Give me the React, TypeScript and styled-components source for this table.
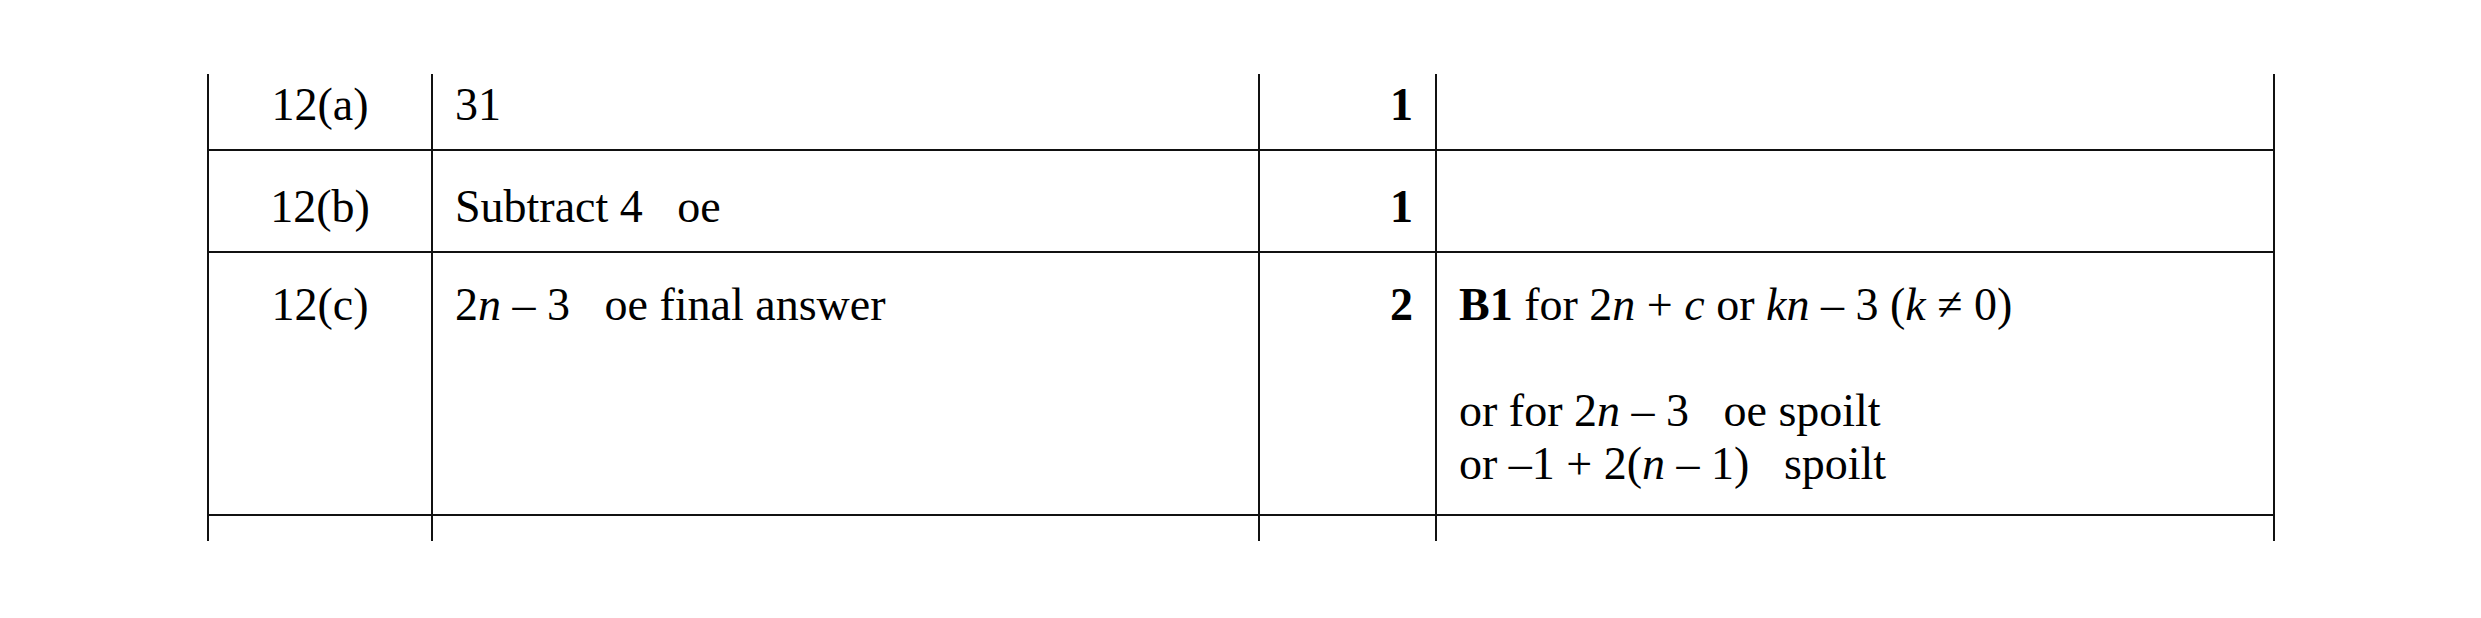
import React from "react";
import styled, { createGlobalStyle } from "styled-components";

const GlobalStyle = createGlobalStyle`
  html, body {
    margin: 0;
    padding: 0;
    background: #ffffff;
  }
  body {
    font-family: "Liberation Serif", "Times New Roman", serif;
    color: #000000;
  }
`;

const Page = styled.div`
  width: 2481px;
  height: 618px;
  box-sizing: border-box;
  padding: 74px 0 0 207px;
  background: #ffffff;
`;

const Table = styled.table`
  border-collapse: collapse;
  table-layout: fixed;
  width: 2068px;
  font-family: "Liberation Serif", "Times New Roman", serif;
  font-size: 46px;
  line-height: 53px;
  color: #000;
`;

const Col = styled.col<{ $w: number }>`
  width: ${(p) => p.$w}px;
`;

const Row = styled.tr<{ $last?: boolean }>`
  & > td {
    border-bottom: ${(p) => (p.$last ? "none" : "2px solid #111")};
  }
`;

const Cell = styled.td<{
  $align?: "left" | "center" | "right";
  $bold?: boolean;
  $pt: number;
  $pb: number;
}>`
  border-left: 2px solid #111;
  border-right: 2px solid #111;
  vertical-align: top;
  text-align: ${(p) => p.$align ?? "left"};
  font-weight: ${(p) => (p.$bold ? 700 : 400)};
  padding: ${(p) => `${p.$pt}px 22px ${p.$pb}px 22px`};
  white-space: pre;
`;

const Line = styled.div`
  min-height: 53px;
`;

const V = styled.i`
  font-family: "Liberation Serif", "Times New Roman", serif;
  font-style: italic;
`;

const B = styled.b`
  font-weight: 700;
`;

type RowSpec = {
  pt: number;
  pb: number;
  q: React.ReactNode;
  answer: React.ReactNode;
  marks: React.ReactNode;
  notes: React.ReactNode;
};

const rows: RowSpec[] = [
  { pt: 4, pb: 18, q: "12(a)", answer: "31", marks: "1", notes: null },
  { pt: 29, pb: 18, q: "12(b)", answer: "Subtract 4   oe", marks: "1", notes: null },
  {
    pt: 25,
    pb: 24,
    q: "12(c)",
    answer: (
      <>
        2<V>n</V> – 3   oe final answer
      </>
    ),
    marks: "2",
    notes: (
      <>
        <Line>
          <B>B1</B> for 2<V>n</V> + <V>c</V> or <V>kn</V> – 3 (<V>k</V> ≠ 0)
        </Line>
        <Line />
        <Line>
          or for 2<V>n</V> – 3   oe spoilt
        </Line>
        <Line>
          or –1 + 2(<V>n</V> – 1)   spoilt
        </Line>
      </>
    ),
  },
];

export default function App() {
  return (
    <>
      <GlobalStyle />
      <Page>
        <Table>
          <colgroup>
            <Col $w={224} />
            <Col $w={827} />
            <Col $w={177} />
            <Col $w={838} />
          </colgroup>
          <tbody>
            {rows.map((r, i) => (
              <Row key={i}>
                <Cell $align="center" $pt={r.pt} $pb={r.pb}>
                  {r.q}
                </Cell>
                <Cell $pt={r.pt} $pb={r.pb}>
                  {r.answer}
                </Cell>
                <Cell $align="right" $bold $pt={r.pt} $pb={r.pb}>
                  {r.marks}
                </Cell>
                <Cell $pt={r.pt} $pb={r.pb}>
                  {r.notes}
                </Cell>
              </Row>
            ))}
            <Row $last>
              <Cell $pt={25} $pb={0} />
              <Cell $pt={25} $pb={0} />
              <Cell $pt={25} $pb={0} />
              <Cell $pt={25} $pb={0} />
            </Row>
          </tbody>
        </Table>
      </Page>
    </>
  );
}
